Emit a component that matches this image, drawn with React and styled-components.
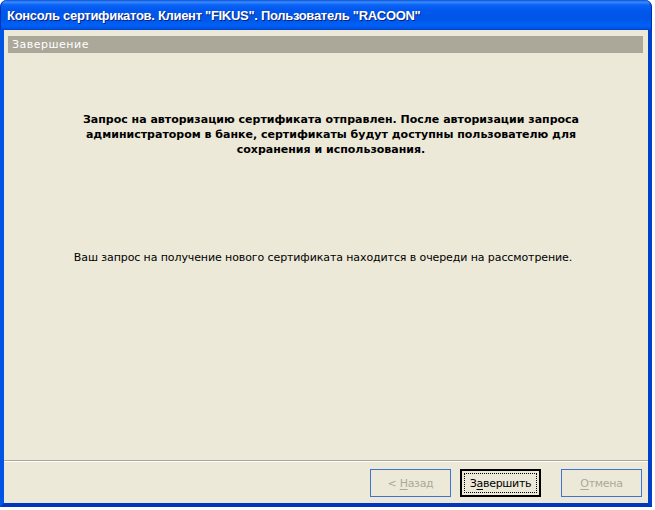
import styled, { createGlobalStyle } from "styled-components";

const GlobalStyle = createGlobalStyle`
  html, body {
    margin: 0;
    padding: 0;
    background: #ffffff;
  }
`;

const Window = styled.div`
  width: 652px;
  height: 507px;
  display: flex;
  flex-direction: column;
  font-family: "DejaVu Sans", "Liberation Sans", sans-serif;
`;

const TitleBar = styled.div`
  height: 30px;
  flex: none;
  display: flex;
  align-items: center;
  padding: 1px 0 0 7px;
  box-sizing: border-box;
  border-radius: 7px 7px 0 0;
  background: linear-gradient(
    to bottom,
    #0a4fd8 0px,
    #3c8cfc 2px,
    #0a62f6 5px,
    #0058ee 10px,
    #0055e5 18px,
    #0060f6 25px,
    #0058ec 28px,
    #0040c4 30px
  );
  box-shadow: inset 1px 0 0 #0033b8, inset -1px 0 0 #002fa8;
  color: #ffffff;
  font-family: "Liberation Sans", "DejaVu Sans", sans-serif;
  font-size: 13px;
  font-weight: bold;
  letter-spacing: -0.3px;
  text-shadow: 1px 1px 0 #0a1f7a;
`;

const Frame = styled.div`
  flex: 1;
  display: flex;
  flex-direction: column;
  background: #ece9d8;
  border-left: 4px solid #0055e5;
  border-right: 4px solid #0040c8;
  border-bottom: 4px solid #0036c0;
`;

const Header = styled.div`
  height: 17px;
  margin: 6px 5px 0 4px;
  padding-left: 4px;
  display: flex;
  align-items: center;
  background: #aca899;
  color: #ffffff;
  font-size: 11px;
  letter-spacing: 0.5px;
`;

const Body = styled.div`
  flex: 1;
  display: flex;
  flex-direction: column;
  align-items: center;
  padding-top: 59px;
`;

const Message = styled.p`
  margin: 0 0 0 ${(p) => p.$shift || 0}px;
  width: 600px;
  text-align: center;
  white-space: nowrap;
  font-size: 11px;
  line-height: 15px;
  font-weight: ${(p) => (p.$bold ? "bold" : "normal")};
  color: #000000;
  letter-spacing: ${(p) => (p.$bold ? "0" : "-0.1px")};
`;

const Spacer = styled.div`
  height: ${(p) => p.$h}px;
`;

const Separator = styled.div`
  height: 1px;
  background: #aca899;
  border-bottom: 1px solid #ffffff;
`;

const Footer = styled.div`
  display: flex;
  justify-content: flex-end;
  align-items: center;
  padding: 7px 6px 6px 0;
`;

const Button = styled.div`
  box-sizing: border-box;
  width: 81px;
  height: 28px;
  margin-left: ${(p) => p.$gap || 0}px;
  display: flex;
  align-items: center;
  justify-content: center;
  position: relative;
  font-size: 11px;
  letter-spacing: -0.3px;
  background: #ece9d8;
  color: ${(p) => (p.$disabled ? "#aca899" : "#000000")};
  border: ${(p) => (p.$default ? "2px solid #000000" : "1px solid #3e73d3")};

  ${(p) =>
    p.$default &&
    `
    &::after {
      content: "";
      position: absolute;
      inset: 2px;
      border: 1px dotted #000000;
    }
  `}

  u {
    text-decoration: underline;
    text-underline-offset: 2px;
  }
`;

const App = () => (
  <>
    <GlobalStyle />
    <Window>
      <TitleBar>Консоль сертификатов. Клиент "FIKUS". Пользователь "RACOON"</TitleBar>
      <Frame>
        <Header>Завершение</Header>
        <Body>
          <Message $bold $shift={10}>
            Запрос на авторизацию сертификата отправлен. После авторизации запроса
            <br />
            администратором в банке, сертификаты будут доступны пользователю для
            <br />
            сохранения и использования.
          </Message>
          <Spacer $h={93} />
          <Message $shift={-6}>
            Ваш запрос на получение нового сертификата находится в очереди на рассмотрение.
          </Message>
        </Body>
        <Separator />
        <Footer>
          <Button $disabled>
            &lt;&nbsp;<u>Н</u>азад
          </Button>
          <Button $default $gap={9}>
            З<u>а</u>вершить
          </Button>
          <Button $disabled $gap={20}>
            <u>О</u>тмена
          </Button>
        </Footer>
      </Frame>
    </Window>
  </>
);

export default App;
